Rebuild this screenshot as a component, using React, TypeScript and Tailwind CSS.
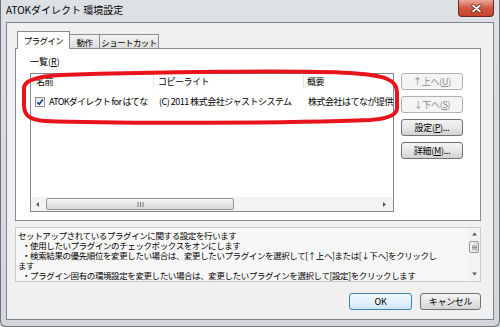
import type { ReactNode } from "react";

const jp = "font-['Noto_Sans_CJK_JP',sans-serif]";

function Btn({ children, className, disabled, primary }: { children: ReactNode; className: string; disabled?: boolean; primary?: boolean }) {
  const look = disabled
    ? "border-[#adb2b5] bg-[#f4f4f4] text-[#8a8a8a]"
    : primary
      ? "border-[#3c7fb1] bg-gradient-to-b from-[#f0f8fd] via-[#e3f2fb] to-[#cde7f7] text-black"
      : "border-[#707070] bg-gradient-to-b from-[#f3f3f3] via-[#e6e6e6] to-[#d3d3d3] text-black";
  return (
    <div className={`flex h-[17px] items-center justify-center whitespace-nowrap rounded-[3px] border text-[9px] leading-[12px] tracking-[-0.3px] ${look} ${className}`}>
      {children}
    </div>
  );
}

function Tri({ dir }: { dir: "l" | "r" | "u" | "d" }) {
  const pts = { l: "4,1 1,3.5 4,6", r: "1,1 4,3.5 1,6", u: "1,4.5 3.5,1.5 6,4.5", d: "1,1.5 3.5,4.5 6,1.5" }[dir];
  return (
    <svg width="7" height="7" viewBox="0 0 7 7">
      <polygon points={pts} fill="#5a5a5a" />
    </svg>
  );
}

export default function App() {
  return (
    <div className="h-[327px] w-[500px] overflow-hidden bg-[#d6d9dd]">
      <div className={`relative flex h-[327px] w-[500px] flex-col rounded-b-[6px] border-x border-b border-[#6f7479] bg-gradient-to-b from-[#dde0e4] to-[#d3d7dc] ${jp}`}>
        {/* title bar */}
        <div className="flex h-[22px] shrink-0 items-start justify-between">
          <div className="pl-[5px] pt-[3px] text-[10px] leading-[14px] text-black">ATOKダイレクト 環境設定</div>
          <div className="mr-[5px] flex h-[17px] w-[36px] items-center justify-center rounded-b-[4px] border border-t-0 border-[#6b2b22] bg-gradient-to-b from-[#eaa898] via-[#d0563f] to-[#c8432b]">
            <svg width="11" height="9" viewBox="0 0 11 9">
              <path d="M2 1.5 L9 7.5 M9 1.5 L2 7.5" stroke="#5a1d14" strokeWidth="3.2" strokeLinecap="round" />
              <path d="M2 1.5 L9 7.5 M9 1.5 L2 7.5" stroke="#ffffff" strokeWidth="1.8" strokeLinecap="round" />
            </svg>
          </div>
        </div>

        {/* client area */}
        <div className="mx-[5px] flex h-[298px] shrink-0 flex-col border border-[#7d848b] bg-[#f0f0f0] text-black">
          {/* tabs */}
          <div className="ml-[10px] mt-[8px] flex h-[17px] items-end whitespace-nowrap text-[8.5px] tracking-[-0.6px]">
            <div className="relative z-10 -mb-px flex h-[18px] w-[53px] items-start justify-center border border-b-0 border-[#898c95] bg-white pt-[2px] leading-[12px]">
              プラグイン
            </div>
            <div className="flex h-[14px] w-[30px] items-center justify-center border-r border-t border-[#898c95] bg-gradient-to-b from-[#f3f3f3] to-[#dcdcdc] leading-[12px]">
              動作
            </div>
            <div className="flex h-[14px] w-[59px] items-center justify-center border-r border-t border-[#898c95] bg-gradient-to-b from-[#f3f3f3] to-[#dcdcdc] leading-[12px]">
              ショートカット
            </div>
          </div>

          {/* tab panel */}
          <div className="ml-[8px] mr-[12px] flex h-[173px] flex-col border border-[#898c95] bg-white pl-[14px] pt-[7px]">
            <div className="text-[9px] leading-[12px]">
              一覧(<u>R</u>)
            </div>
            <div className="mt-[5px] flex gap-[7px]">
              {/* list view */}
              <div className="flex h-[139px] w-[364px] flex-col border border-[#828790] bg-white text-[9px] tracking-[-0.5px]">
                <div className="flex h-[15px] leading-[15px]">
                  <div className="w-[123px] border-r border-[#e3e5e8] pl-[5px]">名前</div>
                  <div className="w-[150px] border-r border-[#e3e5e8] pl-[4px]">コピーライト</div>
                  <div className="pl-[3px]">概要</div>
                </div>
                <div className="mt-[6px] flex h-[13px] items-center whitespace-nowrap leading-[13px]">
                  <div className="flex w-[123px] items-center overflow-hidden tracking-[-0.7px]">
                    <div className="ml-[4px] flex h-[10px] w-[10px] shrink-0 items-center justify-center border border-[#8e8f8f] bg-gradient-to-br from-[#dfe6ee] to-[#f8fafc]">
                      <svg width="8" height="8" viewBox="0 0 8 8">
                        <path d="M1.2 4.2 L3.2 6.2 L6.8 1.4" fill="none" stroke="#1f3d82" strokeWidth="1.6" />
                      </svg>
                    </div>
                    <span className="ml-[4px]">ATOKダイレクト for はてな</span>
                  </div>
                  <div className="w-[150px] overflow-hidden pl-[5px]">(C) 2011 株式会社ジャストシステム</div>
                  <div className="flex-1 overflow-hidden pl-[4px]">株式会社はてなが提供</div>
                </div>
                <div className="flex-1" />
                <div className="flex h-[14px] items-center bg-[#f3f3f3]">
                  <div className="flex w-[15px] justify-center">
                    <Tri dir="l" />
                  </div>
                  <div className="flex h-[12px] w-[188px] items-center justify-center rounded-[2px] border border-[#979797] bg-gradient-to-b from-[#f4f4f4] to-[#d6d6d6]">
                    <svg width="7" height="5" viewBox="0 0 7 5">
                      <path d="M1 0 V5 M3.5 0 V5 M6 0 V5" stroke="#7a7a7a" strokeWidth="1" />
                    </svg>
                  </div>
                  <div className="flex-1" />
                  <div className="flex w-[15px] justify-center">
                    <Tri dir="r" />
                  </div>
                </div>
              </div>

              {/* side buttons */}
              <div className="flex w-[62px] flex-col gap-[6px]">
                <Btn className="w-[62px]" disabled>
                  ↑上へ(<u>U</u>)
                </Btn>
                <Btn className="w-[62px]" disabled>
                  ↓下へ(<u>S</u>)
                </Btn>
                <Btn className="w-[62px]">
                  設定(<u>P</u>)...
                </Btn>
                <Btn className="w-[62px]">
                  詳細(<u>M</u>)...
                </Btn>
              </div>
            </div>
          </div>

          {/* description */}
          <div className="ml-[8px] mr-[12px] mt-[6px] flex h-[55px] border border-[#c9cbcf] bg-[#f7f7f7]">
            <div className="flex-1 overflow-hidden whitespace-nowrap pl-[2px] pt-[2px] text-[8.5px] leading-[10px] tracking-[-0.4px]">
              <div>セットアップされているプラグインに関する設定を行います</div>
              <div className="pl-[4px]">・使用したいプラグインのチェックボックスをオンにします</div>
              <div className="pl-[4px]">・検索結果の優先順位を変更したい場合は、変更したいプラグインを選択して[↑上へ]または[↓下へ]をクリックし</div>
              <div>ます</div>
              <div className="pl-[4px]">・プラグイン固有の環境設定を変更したい場合は、変更したいプラグインを選択して[設定]をクリックします</div>
            </div>
            <div className="flex w-[12px] flex-col items-center bg-[#f3f3f3]">
              <div className="flex h-[13px] items-center">
                <Tri dir="u" />
              </div>
              <div className="flex h-[12px] w-[10px] items-center justify-center rounded-[2px] border border-[#979797] bg-gradient-to-r from-[#f4f4f4] to-[#d8d8d8]">
                <svg width="5" height="5" viewBox="0 0 5 5">
                  <path d="M0 1 H5 M0 2.5 H5 M0 4 H5" stroke="#7a7a7a" strokeWidth="0.8" />
                </svg>
              </div>
              <div className="flex-1" />
              <div className="flex h-[13px] items-center">
                <Tri dir="d" />
              </div>
            </div>
          </div>

          {/* dialog buttons */}
          <div className="mr-[12px] mt-[11px] flex justify-end gap-[8px]">
            <Btn className="w-[63px]" primary>
              OK
            </Btn>
            <Btn className="w-[61px]">キャンセル</Btn>
          </div>
        </div>

        {/* hand drawn red mark over the list */}
        <svg className="pointer-events-none absolute left-[-1px] top-0" width="500" height="327" viewBox="0 0 500 327">
          <path
            d="M62 75 C150 72 300 70 350 73 C385 75 397 80 397 92 L397 108 C397 116 385 119 370 120 C300 123 120 124 45 121 C28 120 24 114 24 105 L24 88 C24 80 40 76 62 75 Z"
            fill="none"
            stroke="#e8141c"
            strokeWidth="4"
            strokeLinejoin="round"
          />
        </svg>
      </div>
    </div>
  );
}
